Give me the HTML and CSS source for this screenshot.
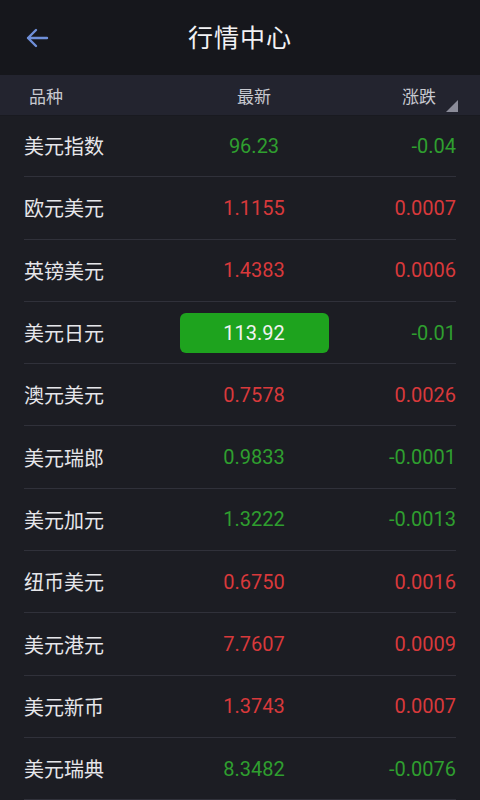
FILE: index.html
```html
<!DOCTYPE html>
<html lang="zh-CN">
<head>
    <meta charset="UTF-8">
    <meta name="viewport" content="width=device-width, initial-scale=1.0">
    <title>行情中心</title>
    <link rel="stylesheet" href="styles.css">
</head>
<body>

<header class="topbar">
    <span class="back">
        <svg width="24" height="20" viewBox="0 0 24 20"><path d="M22 10H3M11 2L3 10L11 18" fill="none" stroke="#6f8fd8" stroke-width="2.4" stroke-linecap="round" stroke-linejoin="round"/></svg>
    </span>
    <h1>行情中心</h1>
</header>

<div class="colhead">
    <span class="c-name">品种</span>
    <span class="c-last">最新</span>
    <span class="c-chg">涨跌</span>
    <span class="corner"></span>
</div>

<ul class="quotes">
    <li><span class="c-name">美元指数</span><span class="c-last down">96.23</span><span class="c-chg down">-0.04</span></li>
    <li><span class="c-name">欧元美元</span><span class="c-last up">1.1155</span><span class="c-chg up">0.0007</span></li>
    <li><span class="c-name">英镑美元</span><span class="c-last up">1.4383</span><span class="c-chg up">0.0006</span></li>
    <li><span class="c-name">美元日元</span><span class="c-last"><span class="flash">113.92</span></span><span class="c-chg down">-0.01</span></li>
    <li><span class="c-name">澳元美元</span><span class="c-last up">0.7578</span><span class="c-chg up">0.0026</span></li>
    <li><span class="c-name">美元瑞郎</span><span class="c-last down">0.9833</span><span class="c-chg down">-0.0001</span></li>
    <li><span class="c-name">美元加元</span><span class="c-last down">1.3222</span><span class="c-chg down">-0.0013</span></li>
    <li><span class="c-name">纽币美元</span><span class="c-last up">0.6750</span><span class="c-chg up">0.0016</span></li>
    <li><span class="c-name">美元港元</span><span class="c-last up">7.7607</span><span class="c-chg up">0.0009</span></li>
    <li><span class="c-name">美元新币</span><span class="c-last up">1.3743</span><span class="c-chg up">0.0007</span></li>
    <li><span class="c-name">美元瑞典</span><span class="c-last down">8.3482</span><span class="c-chg down">-0.0076</span></li>
</ul>

</body>
</html>
```

FILE: styles.css
```css
body {
    margin: 0;
    padding: 0;
    background-color: #1c1d23;
    font-family: Roboto, "Noto Sans CJK SC", sans-serif;
    color: #e6e6ea;
    overflow: hidden;
}

.topbar {
    height: 75px;
    background-color: #16171c;
    display: flex;
    align-items: center;
    justify-content: center;
    position: relative;
}

.topbar h1 {
    margin: 0;
    font-size: 25px;
    font-weight: normal;
    color: #f2f2f4;
    letter-spacing: 1px;
    padding-bottom: 4px;
}

.back {
    position: absolute;
    left: 25px;
    top: 28px;
    display: flex;
}

.colhead {
    height: 40px;
    background-color: #23242f;
    display: flex;
    align-items: center;
    padding: 0 24px 0 29px;
    font-size: 17px;
    color: #c8c9d0;
    position: relative;
    box-shadow: 0 1px 0 #191a20;
}

.colhead .c-name {
    width: 145px;
}

.colhead .c-chg {
    box-sizing: border-box;
    padding-right: 20px;
}

.corner {
    position: absolute;
    right: 22px;
    bottom: 3px;
    width: 0;
    height: 0;
    border-left: 12px solid transparent;
    border-bottom: 12px solid #8b8c99;
}

.quotes {
    list-style: none;
    margin: 0;
    padding: 0 24px;
}

.quotes li {
    height: 61.3px;
    border-bottom: 1px solid #30313a;
    display: flex;
    align-items: center;
    font-size: 20px;
}

.c-name {
    width: 150px;
}

.c-last {
    flex: 1;
    text-align: center;
}

.c-chg {
    width: 122px;
    text-align: right;
}

.up {
    color: #d8393b;
}

.down {
    color: #2f9f2f;
}

.flash {
    display: inline-block;
    width: 149px;
    height: 40px;
    line-height: 40px;
    background-color: #1ea31e;
    color: #f2f2f2;
    border-radius: 6px;
}
```
